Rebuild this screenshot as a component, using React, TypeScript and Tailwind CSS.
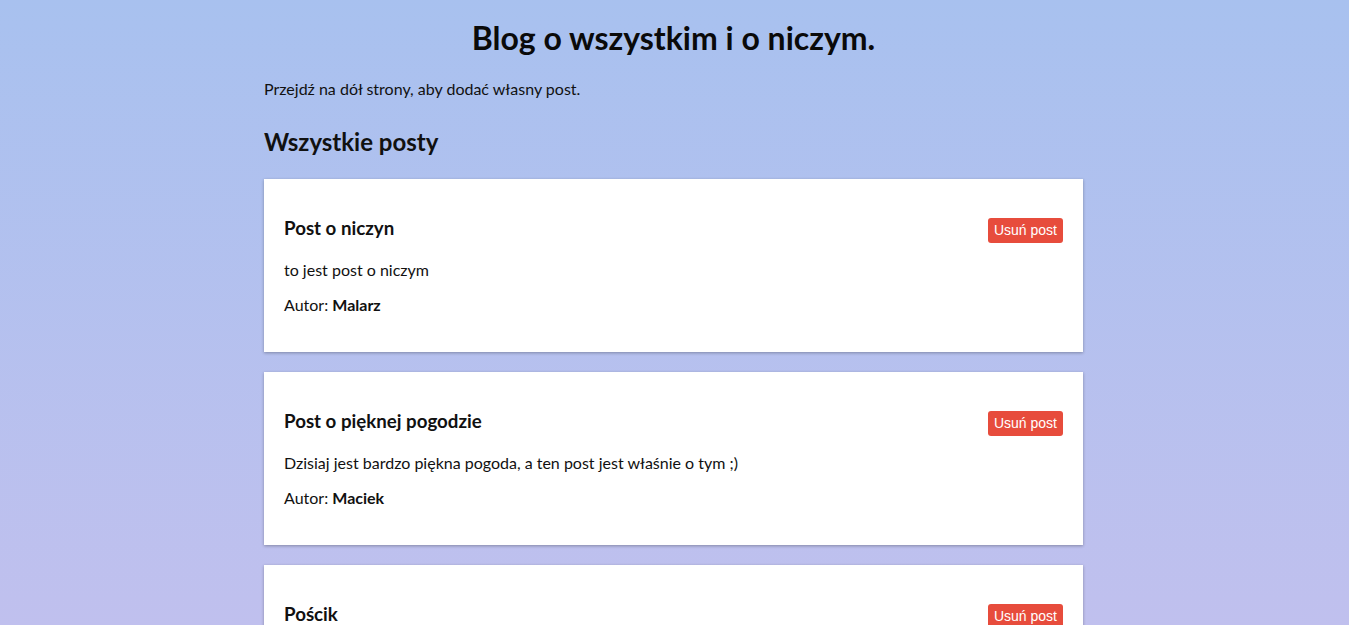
import React from "react";

const posts = [
  { title: "Post o niczyn", body: "to jest post o niczym", author: "Malarz" },
  {
    title: "Post o pięknej pogodzie",
    body: "Dzisiaj jest bardzo piękna pogoda, a ten post jest właśnie o tym ;)",
    author: "Maciek",
  },
  { title: "Pościk", body: "To jest pościk.", author: "Ktoś" },
];

export default function App() {
  return (
    <div
      className="min-h-screen bg-fixed bg-gradient-to-b from-[#a8c1ef] to-[#c0c0ee] text-[#111] pb-10"
      style={{ fontFamily: "Lato, 'Noto Sans', sans-serif" }}
    >
      <div className="mx-auto w-[821px] pr-[2px]">
        <h1 className="pt-[18px] text-center text-[32px] font-bold leading-[40px] text-[#0a0a0a]">
          Blog o wszystkim i o niczym.
        </h1>
        <p className="mt-[21px] text-[16px] leading-[20px]">
          Przejdź na dół strony, aby dodać własny post.
        </p>
        <h2 className="mt-[28px] text-[24px] font-bold leading-[30px]">Wszystkie posty</h2>
        <div className="mt-[22px] flex flex-col gap-5">
          {posts.map((p) => (
            <div
              key={p.title}
              className="bg-white px-5 pt-[36px] pb-[37px] shadow-[0_1px_3px_rgba(0,0,0,0.3)]"
            >
              <div className="flex h-[26px] items-center justify-between">
                <h3 className="text-[18.72px] font-bold leading-[26px]">{p.title}</h3>
                <button
                  className="mt-[5px] h-[25px] rounded-[3px] bg-[#e74c3c] px-[6px] text-[14px] leading-[25px] text-white"
                  style={{ fontFamily: "'Liberation Sans', Arial, sans-serif" }}
                >
                  Usuń post
                </button>
              </div>
              <p className="mt-[19px] text-[16px] leading-[20px]">{p.body}</p>
              <p className="mt-[15px] text-[16px] leading-[20px]">
                Autor: <b className="font-bold">{p.author}</b>
              </p>
            </div>
          ))}
        </div>
      </div>
    </div>
  );
}
